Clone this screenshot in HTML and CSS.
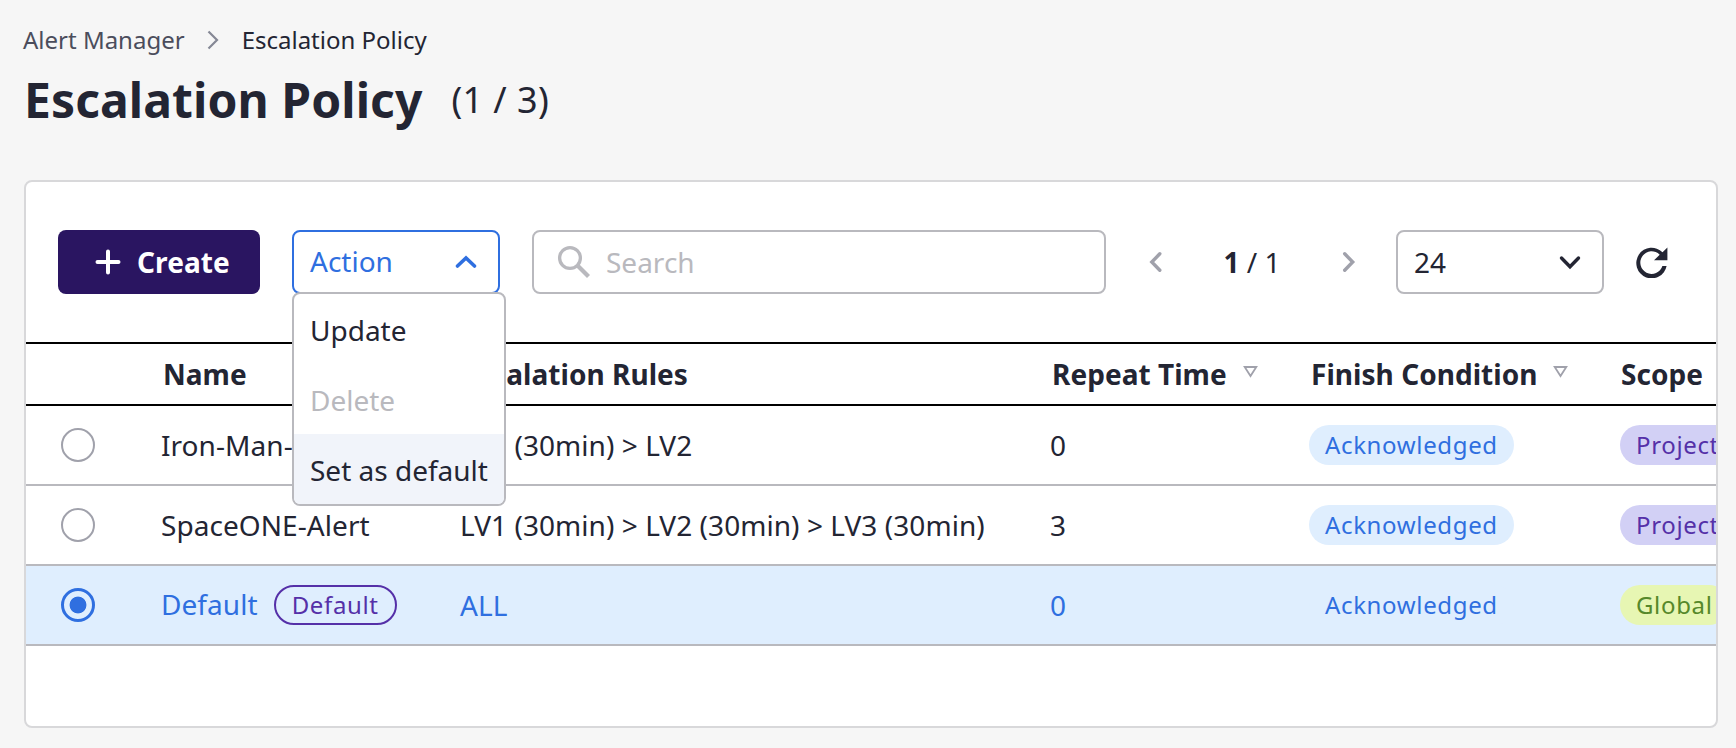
FILE: index.html
```html
<!DOCTYPE html>
<html lang="en">
<head>
<meta charset="utf-8">
<title>Escalation Policy</title>
<link rel="stylesheet" href="styles.css">
</head>
<body>
<header class="page-header">
  <nav class="breadcrumb">
    <a class="crumb">Alert Manager</a>
    <svg class="crumb-sep" width="14" height="22" viewBox="0 0 14 22"><path d="M2.500 2.500 11 11l-8.500 8.500" fill="none" stroke="#858895" stroke-width="2.200"/></svg>
    <span class="crumb current">Escalation Policy</span>
  </nav>
  <h1 class="title">Escalation Policy <span class="count">(1 / 3)</span></h1>
</header>
<main class="card">
  <div class="toolbar">
    <button class="create">
      <svg width="26" height="26" viewBox="0 0 26 26"><path d="M13 2.500v21M2.500 13h21" stroke="#fff" stroke-width="4" stroke-linecap="round"/></svg>
      <span>Create</span>
    </button>
    <div class="dropdown">
      <button class="select active">
        <span class="value">Action</span>
        <svg width="22" height="14" viewBox="0 0 22 14"><path d="M2.500 11 11 3l8.500 8" fill="none" stroke="#2f6fe0" stroke-width="3.600" stroke-linecap="round"/></svg>
      </button>
      <ul class="menu">
        <li class="item">Update</li>
        <li class="item disabled">Delete</li>
        <li class="item hover">Set as default</li>
      </ul>
    </div>
    <div class="search">
      <svg width="34" height="34" viewBox="0 0 34 34"><circle cx="13" cy="13" r="10.400" fill="none" stroke="#b9b9be" stroke-width="3.300"/><path d="M20.500 20.500l11 11" stroke="#b9b9be" stroke-width="4.200"/></svg>
      <span>Search</span>
    </div>
    <div class="pager">
      <svg width="16" height="26" viewBox="0 0 16 26"><path d="M11.800 4.800 3.800 13l8 8.200" fill="none" stroke="#a0a1ab" stroke-width="3.400" stroke-linecap="round"/></svg>
      <span class="pages"><b>1</b> / 1</span>
      <svg width="16" height="26" viewBox="0 0 16 26"><path d="M4.700 4.800 12.700 13l-8 8.200" fill="none" stroke="#a0a1ab" stroke-width="3.400" stroke-linecap="round"/></svg>
    </div>
    <div class="select size">
      <span>24</span>
      <svg width="22" height="16" viewBox="0 0 22 16"><path d="M2.500 4 11 12.700 19.500 4" fill="none" stroke="#232533" stroke-width="3.400" stroke-linecap="round"/></svg>
    </div>
    <svg class="refresh" width="32" height="32" viewBox="0 0 32 32"><path d="M26.400 20h4.200A15.300 15.300 0 1 1 26.500 6.300L31.400 1.500V14.300H18L23.700 8.700A11.300 11.300 0 1 0 26.400 20z" fill="#232533"/></svg>
  </div>
  <div class="table">
    <div class="row head">
      <span></span>
      <span>Name</span>
      <span>Escalation Rules</span>
      <span class="sortable">Repeat Time <svg width="15" height="13" viewBox="0 0 15 13"><path d="M1.700 2h11.600L7.500 11z" fill="none" stroke="#a0a1ab" stroke-width="1.800"/></svg></span>
      <span class="sortable">Finish Condition <svg width="15" height="13" viewBox="0 0 15 13"><path d="M1.700 2h11.600L7.500 11z" fill="none" stroke="#a0a1ab" stroke-width="1.800"/></svg></span>
      <span class="scope">Scope</span>
    </div>
    <div class="row">
      <i class="radio"></i>
      <span>Iron-Man-Alert</span>
      <span>LV1 (30min) &gt; LV2</span>
      <span>0</span>
      <span><em class="badge blue">Acknowledged</em></span>
      <span><em class="badge violet">Project</em></span>
    </div>
    <div class="row">
      <i class="radio"></i>
      <span>SpaceONE-Alert</span>
      <span>LV1 (30min) &gt; LV2 (30min) &gt; LV3 (30min)</span>
      <span>3</span>
      <span><em class="badge blue">Acknowledged</em></span>
      <span><em class="badge violet">Project</em></span>
    </div>
    <div class="row selected">
      <i class="radio on"></i>
      <span class="name"><span class="value">Default</span> <em class="badge outline">Default</em></span>
      <span>ALL</span>
      <span>0</span>
      <span><em class="badge blue">Acknowledged</em></span>
      <span><em class="badge green">Global</em></span>
    </div>
  </div>
</main>
</body>
</html>
```
FILE: styles.css
```css
* { box-sizing: border-box; }

body {
  margin: 0;
  height: 748px;
  overflow: hidden;
  padding: 23px 18px 20px 24px;
  display: flex;
  flex-direction: column;
  background: #f6f6f6;
  color: #232533;
  font: 28px/34px "Noto Sans", sans-serif;
}

svg { display: block; flex: none; }

.page-header { height: 157px; flex: none; }

.breadcrumb {
  display: flex;
  align-items: center;
  height: 34px;
  margin-left: -1px;
  font-size: 24px;
  line-height: 34px;
}
.crumb { color: #4b4d5c; }
.crumb.current { color: #232533; }
.crumb-sep { margin: 0 22px 0 21px; }

.title {
  display: flex;
  align-items: center;
  gap: 29px;
  margin: 10px 0 0;
  height: 66px;
  font-size: 48px;
  line-height: 66px;
  font-weight: 700;
  letter-spacing: 0.08px;
}
.count { font-size: 36px; font-weight: 400; letter-spacing: 0.4px; }

.card {
  flex: 1;
  background: #fff;
  border: 2px solid #d8d8da;
  border-radius: 8px;
  overflow: hidden;
}

.toolbar {
  display: flex;
  align-items: center;
  padding: 48px 48px 48px 32px;
}

.create {
  display: flex;
  align-items: center;
  gap: 16px;
  width: 202px;
  height: 64px;
  padding: 0 0 0 37px;
  border: 0;
  border-radius: 8px;
  background: #2a1561;
  color: #fff;
  font: 700 28px/34px "Noto Sans", sans-serif;
  letter-spacing: 0.1px;
}

.select {
  display: flex;
  align-items: center;
  justify-content: space-between;
  width: 208px;
  height: 64px;
  padding: 0 21px 0 16px;
  border: 2px solid #b9b9be;
  border-radius: 8px;
  background: #fff;
  color: #232533;
  font: 28px/34px "Noto Sans", sans-serif;
}
.select.active { border-color: #2f6fe0; color: #2f6fe0; }
.value { padding-bottom: 2px; }

.dropdown { position: relative; margin-left: 32px; }
.menu {
  position: absolute;
  z-index: 2;
  top: 62px;
  left: 0;
  width: 214px;
  margin: 0;
  padding: 0;
  list-style: none;
  background: #fff;
  border: 2px solid #b9b9be;
  border-radius: 8px;
  overflow: hidden;
}
.item { height: 70px; padding: 0 16px; line-height: 72px; white-space: nowrap; }
.item.disabled { color: #b9b9be; }
.item.hover { background: #f1f4fa; }

.search {
  display: flex;
  align-items: center;
  gap: 15px;
  width: 574px;
  height: 64px;
  margin-left: 32px;
  padding: 0 23px;
  border: 2px solid #b9b9be;
  border-radius: 8px;
  color: #b9b9be;
}

.pager {
  display: flex;
  align-items: center;
  justify-content: space-between;
  width: 208px;
  margin: 0 40px 0 42px;
}
.refresh { margin-left: 32px; }

.row {
  display: grid;
  grid-template-columns: 135px 299px 590px 259px 311px 200px;
  align-items: center;
  height: 80px;
  border-bottom: 2px solid #b9b9be;
  white-space: nowrap;
  letter-spacing: 0.06px;
}
.row.head {
  height: 64px;
  border-top: 2px solid #000;
  border-bottom-color: #000;
  font-weight: 700;
  letter-spacing: 0.04px;
}
.row.head > span { padding-left: 2px; }
.row.head > .scope { padding-left: 1px; }
.sortable { display: flex; align-items: center; gap: 16px; }
.sortable svg { margin-top: -5px; }
.row.selected { background: #dfeefe; color: #2f6fe0; }

.radio {
  width: 34px;
  height: 34px;
  margin-left: 35px;
  border: 2px solid #a0a1ab;
  border-radius: 50%;
  background: #fff;
}
.radio.on {
  border: 3px solid #2f6fe0;
  background: radial-gradient(circle, #2f6fe0 8px, #dfeefe 8.800px);
}

.name { display: flex; align-items: center; gap: 16px; }

.badge {
  display: block;
  width: max-content;
  height: 40px;
  padding: 0 16px;
  border-radius: 20px;
  font-style: normal;
  font-size: 24px;
  line-height: 40px;
  letter-spacing: 0.65px;
}
.blue { background: #dfeefe; color: #2f6fe0; }
.violet { background: #d2d0f5; color: #5530a8; }
.green { background: #e7f6b3; color: #56882a; }
.outline { border: 2px solid #5530a8; color: #5530a8; line-height: 36px; }
```
